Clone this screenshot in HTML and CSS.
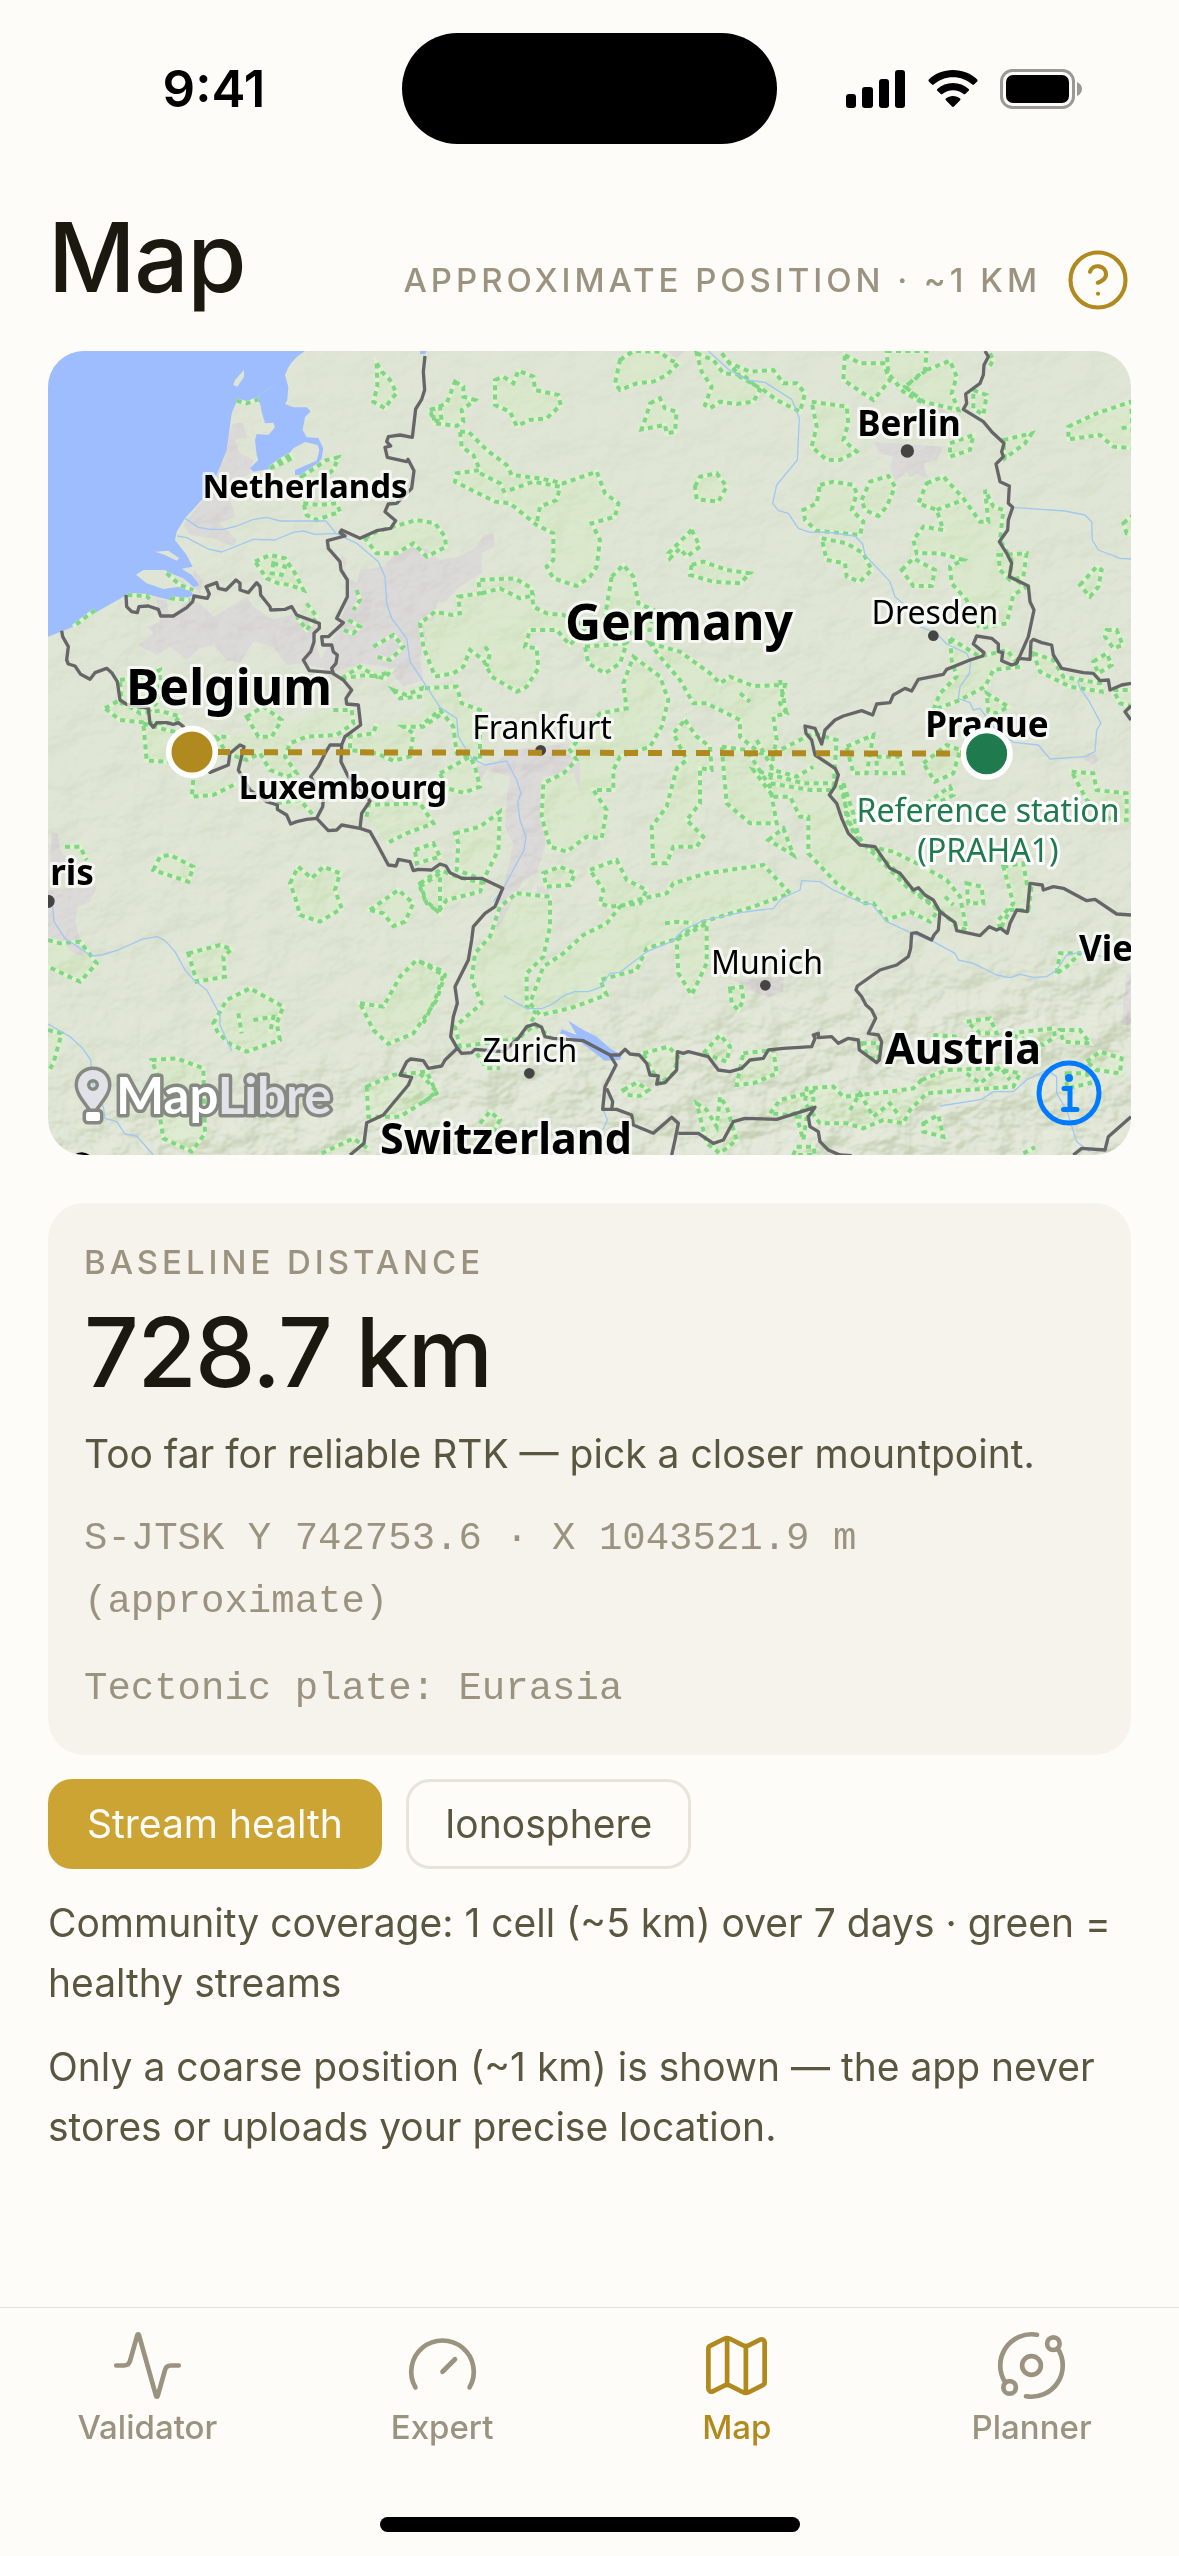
FILE: index.html
```html
<!DOCTYPE html>
<html lang="en">
<head>
<meta charset="utf-8">
<meta name="viewport" content="width=device-width, initial-scale=1">
<title>Map</title>
<link rel="stylesheet" href="styles.css">
</head>
<body>
<div class="status-bar">
  <span class="status-time">9:41</span>
  <span class="island"></span>
  <span class="status-icons">
    <svg width="60" height="38" viewBox="0 0 60 38" aria-hidden="true"><rect x="0" y="24" width="10" height="14" rx="3"/><rect x="16" y="17" width="11" height="21" rx="3"/><rect x="33" y="9" width="10" height="29" rx="3"/><rect x="49" y="0" width="10" height="38" rx="3"/></svg>
    <svg width="50" height="38" viewBox="0 0 50 38" aria-hidden="true"><path d="M25 0C15.500 0 7 3.500.8 9.500Q0 10.500.8 11.400L4 14.600Q4.800 15.300 5.600 14.600C11 9.800 17.500 7.200 25 7.200S39 9.800 44.400 14.600Q45.200 15.300 46 14.600L49.200 11.400Q50 10.500 49.200 9.500C43 3.500 34.500 0 25 0ZM25 13C19 13 13.500 15.200 9.300 19Q8.500 19.900 9.300 20.700L12.800 24Q13.600 24.600 14.400 24C17.300 21.500 21 20.200 25 20.200S32.700 21.500 35.600 24Q36.400 24.600 37.200 24L40.700 20.700Q41.500 19.900 40.700 19C36.500 15.200 31 13 25 13ZM25 26C22.200 26 19.800 26.900 17.900 28.400Q17 29.300 17.900 30.200L24 36.600Q25 37.500 26 36.600L32.100 30.200Q33 29.300 32.100 28.400C30.200 26.900 27.800 26 25 26Z"/></svg>
    <svg width="82" height="40" viewBox="0 0 82 40" aria-hidden="true"><rect x="1.500" y="1.500" width="72" height="37" rx="11" fill="none" stroke="#999996" stroke-width="3"/><rect x="6" y="6" width="63" height="28" rx="7"/><path d="M77 13q5 2.500 5 7t-5 7z" fill="#999996"/></svg>
  </span>
</div>

<main class="screen">
  <header class="page-header">
    <h1 class="title">Map</h1>
    <div class="header-meta">
      <span class="eyebrow">Approximate position · ~1 km</span>
      <button class="help" type="button" aria-label="Help">
        <svg viewBox="0 0 24 24" aria-hidden="true"><circle cx="12" cy="12" r="10"/><path d="M9.090 9a3 3 0 0 1 5.830 1c0 2-3 3-3 3M12 17h.01"/></svg>
      </button>
    </div>
  </header>

  <section class="map" aria-label="Baseline map">
    <svg class="map-canvas" viewBox="0 0 1083 804" preserveAspectRatio="xMidYMid slice">
      <defs>
        <filter id="relief" x="0" y="0" width="100%" height="100%" color-interpolation-filters="sRGB">
          <feTurbulence type="fractalNoise" baseFrequency="0.022 0.030" numOctaves="4" seed="7"/>
          <feDiffuseLighting surfaceScale="14" diffuseConstant="0.680" lighting-color="#ffffff"><feDistantLight azimuth="225" elevation="50"/></feDiffuseLighting>
        </filter>
        <linearGradient id="reliefFade" x1="0.300" y1="0" x2="0.500" y2="1"><stop offset="0" stop-color="#222"/><stop offset="0.400" stop-color="#444"/><stop offset="0.800" stop-color="#555"/><stop offset="0.900" stop-color="#ddd"/><stop offset="1" stop-color="#fff"/></linearGradient>
        <mask id="reliefMask"><rect width="1083" height="804" fill="url(#reliefFade)"/></mask>
        <g id="forests">
          <g>
            <path d="M1010 70L1025 95 1050 120 1070 160 1055 175 1035 205 1000 185 1012 140ZM1170 210L1200 200 1205 245 1180 240ZM785 410L830 380 860 360 895 352 880 390 840 420 800 430ZM690 385L720 362 750 345 755 355 715 375ZM790 490L840 495 890 490 900 515 830 540 800 525ZM645 665L690 645 735 655 765 700 790 750 750 735 715 730 680 715ZM700 670L735 680 725 705 695 700Z"/>
            <path d="M975 595L1010 575 1060 560 1130 540 1185 550 1215 590 1218 620 1160 650 1120 610 1070 640 1010 640ZM195 1105L240 1080 300 1120 360 1112 420 1130 400 1150 340 1150 240 1140ZM240 1020L310 1010 360 990 358 1080 330 1110 245 1090ZM620 1130L670 1100 725 1140 695 1190 655 1190ZM880 1110L935 1110 940 1150 890 1185 800 1190 750 1210 735 1250 770 1300 740 1310 690 1290 660 1240 620 1260 560 1240 530 1190 570 1190"/>
            <path d="M905 1015L960 980 1010 1010 1050 995 1035 1015 980 1005ZM1060 1050L1100 1065 1145 1045 1140 1070 1080 1075ZM310 1150L380 1170 470 1190 460 1270 320 1262ZM1200 1125L1150 1160 1090 1160 1120 1180 1110 1250 1060 1262 1010 1240 930 1230 930 1190 1000 1180 1010 1150M950 750L960 780 940 810M800 790L830 830 800 870 770 830M925 840L960 860 940 880 910 870M1000 920L1060 885 1090 920 1050 960 1010 950M380 700L420 735 460 750M262 765L320 768 330 778M390 775L450 780M165 810L100 860M590 182L620 190 655 178"/>
          </g>
          <g transform="translate(1140)">
            <path d="M105 125L130 140 130 170 165 180 125 210 130 245 110 258 45 250 35 210 80 190ZM225 120L250 110 280 130 295 92 340 110 345 150 415 165 422 195 380 235 330 240 290 258 270 215 225 195ZM600 60L640 33 720 35 750 60 775 70 740 105 700 125 650 130 600 150 585 130ZM690 190L720 175 735 205 770 215 765 275 740 280 735 255 665 268 680 225ZM830 40L880 60 910 100 970 105 1020 150 1000 185 950 192 900 185 870 205 855 195 875 140 845 95ZM905 40L930 70 990 95 1060 90 1090 130 1130 130 1155 160 1140 215 1070 180 1030 150 960 110Z"/>
            <path d="M120 275L145 275 200 330 260 375 275 405 360 415 430 430 530 395 555 460 595 490 585 530 515 550 540 600 530 680 510 710 470 738 400 715 380 680 400 660 400 580 350 555 270 490 225 485 105 425 110 400 180 390 160 345 125 320ZM270 450L340 425 420 440 410 480 360 500 350 550M180 400L240 430 260 470M825 440L840 410 890 400 920 440 895 485 830 478ZM815 570L840 620 800 650 780 625 750 655 745 640ZM815 675L850 665 920 690 990 700 960 730 880 725 810 705ZM575 710L610 675 640 710 655 790 700 810 690 870 620 880 550 850 560 800Z"/>
            <path d="M115 770L180 760 175 720 285 715 335 745 340 800 380 820 430 825 500 860 450 915 410 870 330 870 315 920 350 925 355 985 320 1040 290 1055 215 1010 190 960 150 930 130 980 100 1000 45 1010 10 920 0 850 45 815 95 825 120 820ZM185 760L240 745 300 775 345 765M495 920L620 910 600 970 555 1000 505 970ZM690 910L780 935 870 1000 900 1030 930 1010 1000 1038 1095 1035 1080 1090 1100 1120 1060 1130 1070 1200 1060 1240 1020 1240 960 1190 960 1140 860 1090 820 1090 780 1020 720 950ZM195 920L210 940 200 980M960 1060L990 1085"/>
            <path d="M640 950L720 1010 745 1080 725 1160 690 1220 600 1250 580 1290 580 1350 520 1350 560 1410 545 1495 500 1490 440 1535 390 1520 365 1430 370 1330 430 1300 470 1260 450 1230 540 1120 620 1105 610 1030ZM15 1045L110 1040 125 1090 180 1110 180 1200 180 1260 110 1240 100 1160 60 1110 0 1160M795 1140L830 1190 870 1220 875 1290 840 1285 840 1390 800 1440 850 1490 830 1520 760 1520 740 1570 700 1570 695 1460 740 1400 770 1285 800 1260 760 1180Z"/>
            <path d="M905 1220L980 1230 1050 1340 1070 1450 990 1450 920 1390ZM1010 1200L1060 1290 1130 1310 1180 1280M1060 1240L1180 1180 1250 1200 1240 1350 1170 1350 1050 1330Z"/>
          </g>
          <g transform="translate(2220)">
            <path d="M195 45L240 70 310 70 330 120 280 180 235 150 190 120ZM320 33L440 33 435 90 375 140 430 190 370 155 325 100ZM440 90L510 62 530 110 515 160 535 210 430 185 375 140ZM95 185L200 200 205 250 190 300 230 335 180 360 140 360 95 320 110 260ZM120 435L160 425 220 435 230 460 215 510 250 545 240 585 110 572 75 540 70 510 110 490ZM245 480L270 425 325 408 345 440 320 500 295 528 255 510Z"/>
            <path d="M440 430L490 410 550 475 600 545 625 545 615 450 640 500 670 510 660 600 695 660 690 710 740 740 700 765 680 850 600 865 560 780 515 730 510 680 550 660 480 640 410 640 400 600 430 560 490 570 470 510 415 490ZM470 510L550 480M365 690L400 655 465 690 455 738 400 738ZM125 595L200 610 250 640 275 690 240 725 200 710 195 670 140 660ZM510 310L580 285 570 330 510 350ZM865 260L950 220 1053 185 1060 325 1000 320 960 285 865 298ZM1025 265L1050 260M580 150L620 165 610 225 580 205ZM670 300L755 280 735 310 675 355ZM1030 550L1060 525V580H1040ZM900 735L950 680 965 690 955 740 930 770ZM980 870L1010 870 1028 915 1000 925 975 890ZM940 965L980 940 995 975 955 1000Z"/>
            <path d="M760 940L820 960 850 1010 960 1030 965 1055 870 1040 780 995ZM1000 1050L1060 1050V1100L1020 1090ZM510 895L600 950 680 930 720 980 640 990 615 1040 540 1080 460 1110 480 1060 530 1010 515 960ZM620 1060L685 1100 650 1120 625 1115ZM655 645L740 640 730 710 690 720 660 690ZM630 40L640 60 625 85M0 1020L20 1125M200 1220L280 1185 260 1300 220 1300Z"/>
          </g>
          <g transform="translate(0 1200)">
            <path d="M340 390L360 350 390 345 460 380 445 425ZM750 430L775 380 815 415 850 380 900 400 885 450 905 505 840 545 780 525 765 470ZM990 510L1075 450 1120 490 1095 545 1060 558 1030 520ZM960 790L1030 800 1080 710 1130 660 1200 690 1215 705 1190 780 1120 880 1045 912 1000 870ZM445 640L540 615 575 628 550 650 555 710 470 725ZM520 850L560 780 630 745 730 800 710 850 720 900 620 935 575 915 535 880ZM595 820L605 880M640 840L700 830 690 880M335 960L410 955 490 985 495 1180 455 1235 370 1195 355 1100 350 1000Z"/>
            <path d="M24 600L60 610 120 605 170 670 120 725 24 680M75 320L120 320 140 360M24 870L65 880 40 970 24 995M460 120L455 170 520 165 590 130M710 190L780 180 820 225M980 230L985 195 1140 190 1180 250 1100 280 1040 310M1125 330L1180 310 1200 350 1130 370ZM1140 440L1200 400V520L1155 480ZM980 1040L1060 1005 1160 995 1190 1060 1080 1130 985 1130ZM845 1240L940 1195 990 1230"/>
          </g>
          <g transform="translate(1140 1200)">
            <path d="M60 100L150 50 165 80 180 140 130 158 80 145ZM105 280L180 260 240 215 235 330 210 380 190 420 110 390 115 310ZM0 430L60 390 110 410 190 430 180 455 80 480 55 515 20 490ZM370 400L420 380 465 400 450 435 380 440ZM510 390L590 360 620 420 680 450 660 490 570 500 540 490 550 450ZM600 500L650 480 740 460 760 430 860 400 1030 375 1110 460 1000 500 850 545 760 600 680 625 650 690 540 720 560 765 450 805 360 825 330 790 370 680 430 640 490 585 560 550Z"/>
            <path d="M290 460L390 470 390 560 370 650 320 700 320 800 350 820 300 895 120 920 105 860 185 790 155 720 165 640 210 590 240 500ZM770 600L860 550 860 670 815 765 775 700ZM735 550L770 545 820 550M1060 170L1110 170 1140 230 1165 230 1165 340 1250 430 1330 490 1360 490 1400 540 1470 515 1530 545 1555 510 1460 440 1400 380 1330 310 1290 250 1260 130 1150 130 1000 90ZM930 745L965 740 970 780 955 810 935 790ZM1045 300L1090 265 1120 345ZM0 665L70 705 45 780 10 850M0 1000L50 1055 0 1095M170 940L200 985 240 985"/>
            <path d="M850 940L900 885 930 920 920 965ZM970 940L1060 930 1070 1000 1000 1030 950 1035ZM670 940L745 920 775 950 760 1000 720 1030 690 980ZM610 1050L650 1028 685 1050 660 1068 620 1065ZM830 1090L860 1110 890 1160 900 1070 920 1100 950 1200 900 1240 860 1210ZM1050 1120L1080 1080 1180 1055 1180 1100 1110 1125ZM180 1150L210 1115 240 1140 220 1175M300 890L345 855 390 890"/>
          </g>
          <g transform="translate(2220 1200)">
            <path d="M270 320L340 335 420 375 500 420 540 470 560 570 530 560 480 510 400 450 340 385ZM560 430L605 440 610 490 565 490ZM670 380L730 370 740 430 755 440 745 510 690 510 660 570 655 540 700 490ZM875 95L940 100 950 150 1040 160 1040 240 1000 245 920 180ZM430 70L500 15 540 30 520 100 465 125ZM290 50L360 50 370 100 290 100ZM440 190L510 140 520 165 470 190ZM830 700L840 640 900 640 860 680ZM190 130L220 220 240 310 200 240ZM495 470L520 495"/>
            <path d="M560 845L630 835 650 880 600 880ZM690 880L820 865 825 890 790 915 710 890ZM840 870L900 870 930 910 850 905ZM920 965L960 935 1025 955 1020 1000 950 990ZM860 1000L920 1000 930 1030 860 1045ZM425 1020L500 990 640 985 720 1000 700 1040 560 1050 440 1060 390 1110 370 1150 310 1140 250 1165 200 1150 120 1150 75 1090 80 1045 160 1040 190 1070 290 1060 400 1045ZM560 1000L600 1030 660 980 690 1020M210 1110L240 1060 280 1130 330 1090 360 1130M430 1150L475 1125 490 1190 430 1175ZM50 1130L80 1130 70 1200ZM50 1220L100 1220 105 1245H40ZM245 910L295 910V960L265 950ZM730 1240L765 1222M460 885L530 890"/>
          </g>
        </g>
      </defs>

      <rect width="1083" height="804" class="land"/>
      <g transform="scale(.3333333) translate(-24 -33)">
        <use href="#forests" class="wood"/>
        <g class="urban">
          <path d="M580 250L610 248 620 290 585 300 600 340 640 360 630 400 580 430 570 480 585 530 540 550 590 600 580 620 520 595 450 585 430 555 480 490 530 405 550 320ZM460 690L490 720 480 760 465 745ZM350 780L380 780 390 840 440 780 480 790 520 830 620 770 640 800 700 840 770 820 830 850 825 900 850 985 780 970 740 975 700 920 640 905 600 970 560 960 520 915 480 925 440 960 390 920 350 945 295 915 340 880 320 860 360 845Z"/>
          <path d="M900 640L920 660 910 700 950 730 960 690 1030 680 1070 640 1120 610 1160 630 1200 660 1260 650 1310 620 1330 585 1360 580 1365 620 1325 640 1325 700 1260 740 1220 780 1190 790 1180 840 1150 850 1160 900 1140 950 1150 1020 1090 1040 1040 980 960 970 900 990 860 1000 840 960 900 860 930 740ZM1880 33H1930L1910 55Z"/>
          <path d="M1300 1280L1380 1260 1410 1230 1590 1210 1580 1240 1620 1270 1620 1350 1600 1300 1510 1310 1505 1430 1520 1500 1490 1600 1450 1620 1410 1700 1370 1770 1355 1750 1390 1640 1420 1510 1395 1460 1400 1380 1410 1310 1340 1290 1310 1340ZM2500 305L2710 320 2690 360 2650 370 2665 418 2630 400 2610 412 2600 395 2565 425 2550 380 2560 350 2520 340ZM2660 190L2700 185 2720 220 2660 215Z"/>
          <path d="M24 1650L170 1640 150 1685 115 1700 105 1740 120 1800 130 1850 100 1840 60 1800 24 1790ZM35 1475L52 1480 60 1530 100 1580H30ZM3260 1900H3280V2055H3245L3250 1990ZM2080 1920L2230 1910V1955L2190 1972 2140 1955ZM1490 1640L1530 1640 1520 1680 1490 1670ZM3130 1255L3165 1240 3175 1262 3155 1275Z"/>
        </g>
      </g>
      <rect width="1083" height="804" filter="url(#relief)" mask="url(#reliefMask)" class="relief"/>
      <g transform="scale(.3333333) translate(-24 -33)">
        <path class="water" d="M24 33H795Q750 60 735 105L745 140 742 180 735 192 760 202H800L812 214 795 232 788 270 800 292 835 294 850 325 845 355 825 385 795 405H765V390L800 375 830 362 838 330 833 315 795 306 760 325 745 345 715 365 685 388 640 395 630 385 655 360 650 345 645 300 650 282 685 285 705 262 700 248 675 250 665 215 660 190 645 175 620 190 592 180 575 220 560 330 530 405 485 480 435 535 410 575 405 600 440 645 458 680 425 686 455 705 478 735 462 742 430 715 380 695 440 735 460 765 430 780 390 780 330 765 260 765 180 810 100 860 24 890Z"/>
        <path class="water" d="M1585 2042L1630 2070 1670 2090 1710 2125 1745 2145 1740 2160 1695 2162 1620 2105 1560 2080 1565 2068 1610 2085ZM1140 33H1160L1155 42H1140Z"/>
        <path class="land" d="M612 90V110L592 140 580 135 585 120ZM345 635L385 632 418 655 410 662 375 645ZM288 704L310 690 375 690 420 722 460 750 420 740 370 747 320 730Z"/>
        <use href="#forests" class="wood-edge"/>
        <use href="#forests" class="wood-dash"/>
        <g class="river">
          <path d="M435 535L475 562 510 568 550 568 590 558 640 538 680 532 720 543 858 543 888 580 950 610 1015 665 1035 710 1040 790 1055 835 1100 895 1110 965 1150 1025 1200 1102 1250 1135 1255 1190 1295 1255 1335 1275 1400 1263 1430 1320 1443 1360 1433 1385 1440 1440 1458 1490 1452 1530 1390 1645 1360 1685M412 588L440 593 505 627 545 636 640 598 705 600 760 577 790 573 825 583 888 580M700 135L645 175"/>
          <path d="M2005 33L2065 88 2120 120 2175 127 2255 178 2278 235 2272 360 2210 435 2198 490 2215 512 2245 520 2275 565 2310 577 2360 576 2445 588 2468 612 2475 645 2550 725 2565 770 2595 795M2640 860L2690 880 2720 912 2780 940 2792 965 2788 1000 2760 1040 2755 1075 2790 1088 2800 1110 2820 1105 2860 1160 2920 1207 2995 1215 3030 1257 3135 1250 3165 1235 3170 1170 3183 1150 3145 1080 3120 1045 3113 1020M2918 502L3075 513 3135 525 3155 545 3157 600 3175 630 3240 655 3273 657"/>
          <path d="M38 1700L42 1745 75 1795 155 1848 185 1845 235 1830 305 1798 352 1790 375 1802 405 1835 435 1890 460 1918 500 1950 540 2025 540 2055 575 2132M24 2052L90 2090 128 2125 152 2160 158 2230 190 2300 195 2335 230 2345 255 2382 290 2388 340 2445"/>
          <path d="M1392 1967L1460 2006 1505 2006 1535 1993 1575 1965 1605 1955 1645 1955 1680 1942 1710 1900 1740 1897 1820 1835 1895 1805 1930 1770 1990 1742 2100 1718 2200 1705 2225 1675 2280 1650 2285 1622 2340 1625 2380 1650 2470 1690 2495 1692 2540 1745 2610 1777 2680 1805 2745 1840 2755 1860 2800 1870 2870 1905 2910 1913 2940 1903 2980 1912 3020 1910 3050 1890 3080 1845 3120 1837 3190 1850M2700 2298L2825 2278 2860 2255 2920 2255 2960 2220 3020 2190 3050 2210 3050 2260 3080 2310 3110 2405 3150 2435M1690 2310L1702 2340 1688 2370"/>
        </g>
        <g class="border">
          <path d="M1155 48L1150 95 1154 150 1145 178 1127 207 1117 292 1080 285 1045 290 1040 305 1052 318 1035 322 1042 352 1100 365 1104 358 1122 392 1115 445 1070 490 1045 492 1035 515 1067 542 1052 565 1010 572 960 595 905 570 900 578 915 588 862 602 865 625 900 665 903 690 922 720 922 770 890 835 910 848 865 890 845 890 848 915 875 915 880 935 892 945 888 970 875 985 880 1000"/>
          <path d="M258 765L260 800 275 815 292 818 297 800 325 798 355 808 362 828 400 828 440 803 458 785 462 768 502 775 508 762 498 740 530 728 535 745 558 750 588 720 600 730 600 750 625 758 650 728 660 740 662 765 690 800 692 810 735 808 755 800 770 825 838 850 838 865 822 880 822 905 812 935 790 960 808 992 875 998 910 1020 935 1050 918 1075 920 1092 955 1095 962 1155 915 1190 905 1215 870 1215 858 1235 835 1280 812 1310 850 1380 848 1400 830 1435M905 1215L903 1265 925 1310 990 1383 965 1420 960 1465"/>
          <path d="M65 872L68 890 85 920 80 960 85 972 105 978 122 1003 150 1018 165 998 200 985 215 998 232 1025 240 1080 260 1093 325 1105 330 1150 340 1162 350 1148 380 1148 400 1153 415 1148 430 1160 456 1236 510 1297 565 1275 570 1240 600 1215 612 1220 595 1290 630 1350 680 1385 712 1395 712 1408 740 1425 752 1452 770 1445 800 1438 830 1435 865 1472 890 1470 905 1455 960 1465 990 1475 1010 1510 1045 1575 1068 1578 1075 1558 1110 1565 1120 1592 1135 1588 1175 1590 1200 1572 1218 1578 1230 1598 1265 1615 1325 1615 1388 1645 1365 1700 1335 1720 1300 1760 1295 1800 1285 1860 1245 1940 1252 1990 1240 2030 1232 2090 1252 2125 1215 2160 1205 2178 1165 2185 1150 2162 1112 2157 1100 2165 1080 2205 1115 2212 1105 2235 1030 2325 980 2348 972 2410 930 2445"/>
          <path d="M1252 2125L1265 2140 1295 2138 1305 2128 1390 2135 1435 2095 1460 2060 1485 2052 1505 2062 1515 2090 1540 2095 1630 2102 1710 2145 1738 2145 1755 2128 1770 2142 1798 2145 1820 2170 1830 2205 1855 2208 1850 2232 1875 2228 1910 2190 1912 2135 1930 2140 1945 2135 2005 2150 2035 2190 2070 2195 2105 2185 2130 2160 2170 2155 2185 2130 2230 2125 2315 2120 2325 2095 2320 2085 2335 2080 2335 2093 2375 2090 2395 2110 2425 2095 2455 2100 2458 2130 2510 2168 2518 2160 2525 2105 2515 2085 2485 2080 2507 2035 2495 2010 2478 1995 2465 1970 2448 1950 2452 1938 2520 1890 2570 1875 2605 1850 2612 1825 2615 1780 2630 1778 2675 1800 2682 1785 2695 1770 2700 1715"/>
          <path d="M1710 2145L1728 2175 1695 2240 1688 2308 1715 2308 1718 2285 1700 2245M1688 2308L1730 2308 1775 2325 1780 2355 1840 2380 1895 2332 1915 2350 1905 2400 1895 2445M1915 2380L1975 2380 2020 2410 2050 2400 2080 2345 2115 2335 2210 2338 2325 2302 2305 2330 2310 2360 2335 2375 2340 2405 2365 2430 2400 2445 2435 2447M3100 2445L3125 2425 3195 2430 3205 2390 3273 2330"/>
          <path d="M2835 33L2845 50 2832 75 2830 105 2820 130 2777 162 2780 190 2770 208 2830 245 2855 275 2892 310 2885 335 2890 350 2868 372 2880 425 2908 438 2905 490 2918 502 2905 540 2903 570 2878 605 2900 640 2915 670 2908 710 2965 738 2970 785 2982 810 2965 890 2930 970 2915 975 2885 962 2888 938 2875 935 2875 912 2855 895 2810 888 2800 912 2832 938 2828 948 2790 960 2720 988 2710 1003 2635 1018 2615 1053 2595 1045 2560 1065 2550 1088 2510 1092 2498 1125 2465 1112 2410 1128 2385 1140 2355 1170 2345 1212 2325 1165 2295 1158 2298 1180 2315 1200 2325 1245 2385 1285 2395 1305 2385 1340 2368 1365 2390 1390 2405 1435 2425 1480 2460 1515 2505 1520 2550 1585 2580 1600 2620 1650 2635 1643 2655 1665 2680 1680 2700 1715 2745 1748 2750 1772 2820 1787 2848 1760 2870 1770 2882 1765 2902 1780 2910 1750 2930 1710 2962 1715 2970 1630 3007 1635 3010 1650 3040 1640 3070 1645 3140 1682 3165 1678 3230 1722 3273 1725"/>
          <path d="M2930 970L2935 955 2970 958 2973 905 2980 898 3005 908 3035 915 3040 945 3065 985 3130 998 3160 1000 3180 1022 3205 1020 3210 1050 3245 1035 3273 1030M3273 1098L3255 1115 3273 1140"/>
        </g>
        <g class="city"><circle cx="2602" cy="333" r="20"/><circle cx="2680" cy="887" r="16"/><circle cx="1502" cy="1231" r="16"/><circle cx="24" cy="1684" r="20"/><circle cx="2176" cy="1936" r="16"/><circle cx="1468" cy="2200" r="16"/></g>
        <path d="M98 2447Q125 2427 152 2447Z"/>
      </g>

      <g class="place">
        <text class="lg" x="181" y="354">Belgium</text>
        <text class="lg" x="631" y="289">Germany</text>
        <text class="md" x="915" y="713">Austria</text>
        <text class="md" x="458" y="803">Switzerland</text>
        <text class="sm" x="257" y="147">Netherlands</text>
        <text class="sm" x="295" y="448">Luxembourg</text>
        <text class="capital" x="861" y="85">Berlin</text>
        <text class="capital" x="939" y="386">Prague</text>
        <text class="capital" x="24" y="534">ris</text>
        <text class="capital start" x="1031" y="610">Vienna</text>
        <text class="town" x="494" y="388">Frankfurt</text>
        <text class="town" x="887" y="273">Dresden</text>
        <text class="town" x="719" y="623">Munich</text>
        <text class="town" x="482" y="711">Zurich</text>
        <text class="town station" x="940" y="471">Reference station</text>
        <text class="town station" x="940" y="511">(PRAHA1)</text>
      </g>

      <g transform="scale(.3333333) translate(-24 -33)">
        <path class="baseline" d="M456 1236L2840 1241"/>
        <circle class="pin rover" cx="456" cy="1236" r="70"/>
        <circle class="pin base" cx="2840" cy="1241" r="70"/>
      </g>

      <g class="logo">
        <path d="M45 719c-8.500 0-15 6.500-15 15 0 9 8 16 15 27 7-11 15-18 15-27 0-8.500-6.500-15-15-15zm0 9a6 6 0 1 1 0 12 6 6 0 0 1 0-12z"/>
        <rect class="logo-foot" x="38" y="761" width="14" height="9" rx="2"/>
        <text x="68" y="763"><tspan class="logo-map">Map</tspan>Libre</text>
      </g>
    </svg>
    <button class="map-info" type="button" aria-label="Map attribution">
      <svg viewBox="0 0 66 66" aria-hidden="true"><circle cx="33" cy="33" r="30"/><path d="M28 28.500H34V49M27.500 49.500H41"/><circle class="dot" cx="33" cy="18" r="4"/></svg>
    </button>
  </section>

  <section class="card">
    <h2 class="eyebrow">Baseline distance</h2>
    <p class="value">728.7 km</p>
    <p class="advice">Too far for reliable RTK — pick a closer mountpoint.</p>
    <p class="mono">S-JTSK Y 742753.6 · X 1043521.9 m (approximate)</p>
    <p class="mono">Tectonic plate: Eurasia</p>
  </section>

  <div class="chips">
    <button class="chip active" type="button" aria-pressed="true">Stream health</button>
    <button class="chip" type="button" aria-pressed="false">Ionosphere</button>
  </div>

  <p class="note">Community coverage: 1 cell (~5 km) over 7 days · green = healthy streams</p>
  <p class="note">Only a coarse position (~1 km) is shown — the app never stores or uploads your precise location.</p>
</main>

<footer class="bottom">
  <nav class="tabs" aria-label="Main">
    <a class="tab" href="#validator"><svg viewBox="0 0 24 24" aria-hidden="true"><path d="M22 12h-2.480a2 2 0 0 0-1.930 1.460l-2.350 8.360a.25.25 0 0 1-.48 0L9.240 2.180a.25.25 0 0 0-.48 0l-2.350 8.360A2 2 0 0 1 4.490 12H2"/></svg>Validator</a>
    <a class="tab" href="#expert"><svg viewBox="0 0 24 24" aria-hidden="true"><path d="m12 14 4-4M3.340 19a10 10 0 1 1 17.320 0"/></svg>Expert</a>
    <a class="tab current" href="#map" aria-current="page"><svg viewBox="0 0 24 24" aria-hidden="true"><path d="M14.106 5.553a2 2 0 0 0 1.788 0l3.659-1.830A1 1 0 0 1 21 4.619v12.764a1 1 0 0 1-.553.894l-4.553 2.277a2 2 0 0 1-1.788 0l-4.212-2.106a2 2 0 0 0-1.788 0l-3.659 1.830A1 1 0 0 1 3 19.381V6.618a1 1 0 0 1 .553-.894l4.553-2.277a2 2 0 0 1 1.788 0zM15 5.764v15M9 3.236v15"/></svg>Map</a>
    <a class="tab" href="#planner"><svg viewBox="0 0 24 24" aria-hidden="true"><path d="M20.341 6.484A10 10 0 0 1 10.266 21.850M3.659 17.516A10 10 0 0 1 13.740 2.152"/><circle cx="12" cy="12" r="3"/><circle cx="19" cy="5" r="2"/><circle cx="5" cy="19" r="2"/></svg>Planner</a>
  </nav>
  <div class="home-indicator"></div>
</footer>
</body>
</html>
```
FILE: styles.css
```css
:root {
  --bg: #fefcf8;
  --ink: #1b1810;
  --text: #5a563f;
  --muted: #9b937f;
  --gold: #b08a1e;
  --green: #1f7a4d;
}

* { box-sizing: border-box; }

body {
  margin: 0;
  min-height: 100vh;
  display: flex;
  flex-direction: column;
  background: var(--bg);
  color: var(--text);
  font-family: Inter, "Liberation Sans", sans-serif;
  font-size: 39px;
  line-height: 60px;
}

h1, h2, p { margin: 0; }
button { font: inherit; cursor: pointer; }

.status-bar {
  display: grid;
  grid-template-columns: 1fr 375px 1fr;
  align-items: center;
  padding-top: 33px;
  color: #000;
}
.status-time {
  padding-left: 26px;
  text-align: center;
  font-size: 51px;
  font-weight: 600;
}
.island {
  height: 111px;
  border-radius: 56px;
  background: #000;
}
.status-icons {
  display: flex;
  align-items: center;
  justify-content: center;
  gap: 22px;
  padding-right: 29px;
}

.screen {
  flex: 1;
  display: flex;
  flex-direction: column;
  gap: 24px;
  padding: 55px 48px 48px;
}
.page-header {
  display: flex;
  align-items: baseline;
  justify-content: space-between;
  margin-bottom: 12px;
}
.title, .value {
  color: var(--ink);
  font-size: 96px;
  font-weight: 500;
  line-height: 116px;
  letter-spacing: -0.015em;
}
.header-meta {
  display: flex;
  align-items: center;
  gap: 24px;
}
.eyebrow {
  color: var(--muted);
  font-size: 33px;
  font-weight: 500;
  line-height: 40px;
  letter-spacing: 0.12em;
  text-transform: uppercase;
}
.help {
  width: 66px;
  height: 66px;
  padding: 0;
  border: 0;
  background: none;
  color: var(--gold);
}
.help svg, .tab svg {
  display: block;
  fill: none;
  stroke: currentColor;
  stroke-width: 1.5;
  stroke-linecap: round;
  stroke-linejoin: round;
}

.map {
  position: relative;
  aspect-ratio: 1083 / 804;
  margin-bottom: 24px;
  border-radius: 36px;
  overflow: hidden;
}
.map-canvas {
  display: block;
  width: 100%;
  height: 100%;
}
.land { fill: #dfe5d5; }
.water { fill: #9ebdff; }
.urban { fill: #dbd9d7; }
.wood { fill: #d9e7cb; }
.wood-edge { fill: none; stroke: #def1cd; stroke-width: 13; }
.wood-dash { fill: none; stroke: #80d684; stroke-width: 12; stroke-dasharray: 15 13; }
.relief { mix-blend-mode: soft-light; }
.river { fill: none; stroke: #a0c8f0; stroke-width: 4; stroke-linejoin: round; }
.border { fill: none; stroke: #666568; stroke-width: 10; stroke-linejoin: round; }
.city { fill: #444; }
.place {
  font-family: "Noto Sans", sans-serif;
  font-weight: 700;
  text-anchor: middle;
  fill: #000;
  stroke: rgba(255, 255, 255, .7);
  stroke-width: 6;
  stroke-linejoin: round;
  paint-order: stroke;
}
.lg { font-size: 50px; }
.md { font-size: 43px; }
.capital { font-size: 35px; }
.sm { font-size: 33px; }
.start { text-anchor: start; }
.town { font-size: 32px; font-weight: 400; }
.station { fill: var(--green); stroke: #fff; }
.baseline { fill: none; stroke: var(--gold); stroke-width: 18; stroke-dasharray: 42 30; }
.pin { stroke: #fff; stroke-width: 17; }
.rover { fill: var(--gold); }
.base { fill: var(--green); }
.logo {
  font-family: Lato, sans-serif;
  font-size: 51px;
  font-weight: 700;
  fill: #e1e1e8;
  stroke: #858981;
  stroke-width: 7;
  stroke-linejoin: round;
  paint-order: stroke;
}
.logo-map, .logo-foot { fill: #fff; }
.map-info {
  position: absolute;
  right: 29px;
  bottom: 29px;
  width: 66px;
  height: 66px;
  padding: 0;
  border: 0;
  background: none;
}
.map-info svg {
  display: block;
  fill: none;
  stroke: #007aff;
  stroke-width: 5;
  stroke-linecap: round;
}
.map-info .dot { fill: #007aff; stroke: none; }

.card {
  padding: 39px 36px 34px;
  border-radius: 36px;
  background: #f6f3ed;
}
.value { margin: 12px 0 14px; }
.mono {
  margin-top: 24px;
  color: var(--muted);
  font-family: "Liberation Mono", monospace;
  line-height: 63px;
}

.chips { display: flex; gap: 24px; }
.chip {
  height: 90px;
  padding: 0 36px;
  border: 3px solid #e8e4d9;
  border-radius: 24px;
  background: transparent;
  color: var(--text);
}
.chip.active {
  border-color: #cca434;
  background: #cca434;
  color: #fefcf8;
}

.bottom {
  border-top: 1px solid #e0e0dc;
  padding-bottom: 24px;
}
.tabs {
  display: grid;
  grid-template-columns: repeat(4, 1fr);
  padding: 20px 0 70px;
}
.tab {
  display: flex;
  flex-direction: column;
  align-items: center;
  gap: 4px;
  color: var(--muted);
  font-size: 33px;
  font-weight: 500;
  line-height: 40px;
  text-decoration: none;
}
.tab svg { width: 75px; height: 75px; }
.tab.current { color: var(--gold); }
.home-indicator {
  width: 420px;
  height: 15px;
  margin: 0 auto;
  border-radius: 8px;
  background: #000;
}
```
